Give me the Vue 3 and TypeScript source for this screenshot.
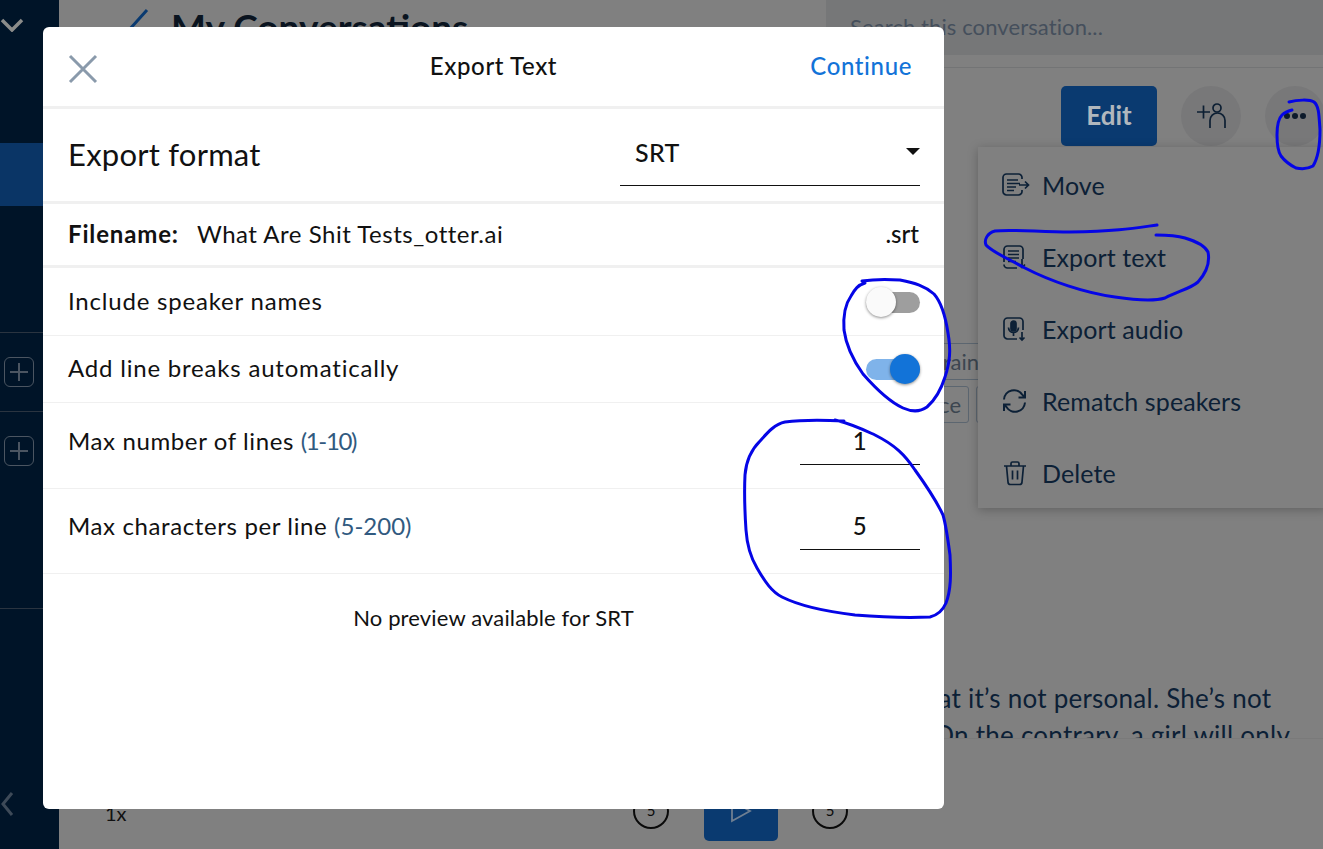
<script setup lang="ts">
interface MenuItem { label: string; icon: string }
const menu: MenuItem[] = [
  { label: 'Move', icon: 'move' },
  { label: 'Export text', icon: 'text' },
  { label: 'Export audio', icon: 'audio' },
  { label: 'Rematch speakers', icon: 'sync' },
  { label: 'Delete', icon: 'trash' },
]
const ink: string[] = [
  'M1289 102C1297 100 1309 99 1314 102C1319 106 1319 115 1320 130C1320 145 1318 158 1313 166C1308 169 1301 169 1296 168C1290 165 1284 160 1281 156C1277 150 1277 142 1277 135C1277 125 1278 119 1282 115C1285 112 1288 111 1292 110',
  'M1157 225C1135 228 1120 231 1070 232C1040 232 1010 229 995 231C987 233 984 240 986 245C992 252 1005 257 1025 268C1050 281 1085 293 1115 297C1135 300 1155 301 1165 298C1178 291 1190 289 1198 282C1207 272 1210 262 1208 252C1205 246 1195 241 1185 238C1175 235 1165 235 1156 235',
  'M862 281C875 279 885 279 900 280C915 283 925 286 934 294C942 303 946 320 948 333C951 350 950 362 945 377C941 390 935 400 927 407C920 412 912 412 903 408C890 402 877 390 863 374C853 360 846 345 844 330C843 315 846 303 851 296C855 289 858 285 865 283',
  'M844 421C825 420 800 420 785 422C775 424 768 432 760 441C751 450 746 462 745 475C744 495 745 515 746 530C747 545 751 558 757 568C765 582 772 592 782 597C800 606 830 612 855 615C880 617 905 618 930 617C938 615 943 610 946 603C951 590 951 575 950 555C948 540 946 525 943 515C936 500 928 488 915 470C905 455 895 445 875 435C862 429 852 424 835 420',
]
</script>

<template>
  <div class="app">
    <aside class="rail">
      <svg class="chev" width="24" height="16" viewBox="0 0 24 16"><path d="M2 4l10 10 10-10" fill="none" stroke="#8b8c8a" stroke-width="3.500" /></svg>
      <div class="rail-active"></div>
      <div class="rail-group">
        <div class="add-cell"><span class="add"></span></div>
        <div class="add-cell"><span class="add"></span></div>
      </div>
      <div class="rail-rule"></div>
      <svg class="back" width="14" height="26" viewBox="0 0 14 26"><path d="M12 3L3 14l9 11" fill="none" stroke="#3d4a58" stroke-width="3" /></svg>
    </aside>

    <main class="main">
      <header class="topbar">
        <div class="crumb">
          <svg width="22" height="40" viewBox="0 0 22 40"><path d="M20 2L2 22l18 20" fill="none" stroke="#0a3a70" stroke-width="3" /></svg>
          <h1>My Conversations</h1>
        </div>
        <div class="search">Search this conversation...</div>
      </header>
      <div class="content">
        <div class="actions">
          <button class="edit">Edit</button>
          <span class="round">
            <svg width="34" height="30" viewBox="0 0 34 30"><g fill="none" stroke="#0d1f33" stroke-width="1.700"><path d="M3 11h13M9.500 4.500v13" /><circle cx="23" cy="7" r="4" /><path d="M16 27v-7.500a7.500 7.500 0 0 1 15 0V27" /></g></svg>
          </span>
          <span class="round dots"><i></i><i></i><i></i></span>
        </div>
        <div class="tags">
          <div class="tag-line"><span class="tag wide">Brain</span></div>
          <div class="tag-line"><span class="tag sci">Science</span><span class="tag blank"></span></div>
        </div>
        <p class="para">You have to understand that it’s not personal. She’s not<br />trying to hurt you by this. On the contrary, a girl will only</p>
        <nav class="menu">
          <div v-for="m in menu" :key="m.label" class="menu-row">
            <svg width="30" height="30" viewBox="0 0 30 30" fill="none" stroke="#0c2036" stroke-width="1.700">
              <template v-if="m.icon === 'move'">
                <path d="M22 9V7.500A3.500 3.500 0 0 0 18.500 4H6.500A3.500 3.500 0 0 0 3 7.500v14A3.500 3.500 0 0 0 6.500 25h12a3.500 3.500 0 0 0 3.500-3.500V20" />
                <path d="M7 10h11M7 13.500h13M7 17h9M7 20.500h7M19 15h9M25 11.500l3.500 3.500-3.500 3.500" />
              </template>
              <template v-else-if="m.icon === 'text'">
                <path d="M4 20V7.500A3.500 3.500 0 0 1 7.500 4h12A3.500 3.500 0 0 1 23 7.500V17M17 26H7.500A3.500 3.500 0 0 1 4 22.500" />
                <path d="M8 9h11M8 12.500h11M8 16h11M8 19.500h8M22 17v8M19 22.500l3 3 3-3" />
              </template>
              <template v-else-if="m.icon === 'audio'">
                <path d="M17 25H7.500A3.500 3.500 0 0 1 4 21.500V7.500A3.500 3.500 0 0 1 7.500 4h12A3.500 3.500 0 0 1 23 7.500V16" />
                <rect x="11" y="7" width="5" height="10" rx="2.500" fill="#0c2036" />
                <path d="M8.500 13.500a5 5 0 0 0 10 0M13.500 18.500V22M22 18v8M19.500 23.500l2.500 2.500 2.500-2.500" />
              </template>
              <template v-else-if="m.icon === 'sync'">
                <path stroke-width="2" d="M4 13.500A10 10 0 0 1 22.500 9L25 11.500M25 5v6.500h-6.500M25 16.500A10 10 0 0 1 6.500 21L4 18.500M4 25v-6.500h6.500" />
              </template>
              <template v-else>
                <path d="M4 8h22M11 8V5.500A1.500 1.500 0 0 1 12.500 4h5A1.500 1.500 0 0 1 19 5.500V8M6.500 8l1.500 16a2.500 2.500 0 0 0 2.500 2.500h9a2.500 2.500 0 0 0 2.500-2.500L23.500 8M12.500 12.500v9M17.500 12.500v9" />
              </template>
            </svg>
            <span>{{ m.label }}</span>
          </div>
        </nav>
      </div>
      <footer class="player">
        <span class="speed">1x</span>
        <div class="controls">
          <span class="skip">5</span>
          <span class="play">
            <svg width="24" height="24" viewBox="0 0 24 24"><path d="M3 2v20l18-10z" fill="none" stroke="#6f7f92" stroke-width="1.800" /></svg>
          </span>
          <span class="skip">5</span>
        </div>
      </footer>
    </main>

    <section class="dialog">
      <header class="dlg-head">
        <svg class="close" width="30" height="30" viewBox="0 0 30 30"><path d="M2 2l26 26M28 2L2 28" stroke="#8a9aab" stroke-width="3" fill="none" /></svg>
        <h2>Export Text</h2>
        <a class="cont">Continue</a>
      </header>
      <div class="format">
        <span class="fmt-label">Export format</span>
        <div class="select"><span>SRT</span><i class="caret"></i></div>
      </div>
      <div class="file">
        <b>Filename:</b><span class="fname">What Are Shit Tests_otter.ai</span><span class="ext">.srt</span>
      </div>
      <div class="opt sw-row first">
        <span>Include speaker names</span>
        <span class="switch"><i class="track"></i><i class="knob"></i></span>
      </div>
      <div class="opt sw-row">
        <span>Add line breaks automatically</span>
        <span class="switch on"><i class="track"></i><i class="knob"></i></span>
      </div>
      <div class="opt num-row lines">
        <span>Max number of lines <em>(1-10)</em></span>
        <span class="num">1</span>
      </div>
      <div class="opt num-row chars">
        <span>Max characters per line <em>(5-200)</em></span>
        <span class="num">5</span>
      </div>
      <p class="nopreview">No preview available for SRT</p>
    </section>

    <svg class="ink" width="1323" height="849" viewBox="0 0 1323 849">
      <path v-for="(d, i) in ink" :key="i" :d="d" fill="none" stroke="#0505e6" stroke-width="3" stroke-linecap="round" />
    </svg>
  </div>
</template>

<style>
html, body { margin: 0; padding: 0; overflow: hidden; background: #808080; }
</style>

<style scoped>
.app {
  position: relative;
  display: flex;
  width: 1323px;
  height: 849px;
  overflow: hidden;
  background: #808080;
  font-family: Lato, "Noto Sans", sans-serif;
  color: #0c2036;
}
.rail {
  position: relative;
  flex: 0 0 59px;
  display: flex;
  flex-direction: column;
  background: #001428;
}
.chev { margin: 16px 0 0 0; }
.rail-active { height: 63px; margin-top: 111px; background: #0a3566; }
.rail-group { margin-top: 126px; }
.rail-rule { margin-top: 118px; height: 1px; background: #2a3440; }
.add-cell { height: 78px; border-top: 1px solid #2a3440; display: flex; align-items: center; padding-left: 4px; }
.add {
  position: relative;
  width: 28px;
  height: 28px;
  border: 1.500px solid #4b5561;
  border-radius: 6px;
}
.add::before, .add::after { content: ""; position: absolute; background: #4b5561; }
.add::before { left: 5px; right: 5px; top: 13px; height: 1.500px; }
.add::after { top: 5px; bottom: 5px; left: 13px; width: 1.500px; }
.back { position: absolute; left: 0; top: 790px; }

.main { flex: 1; min-width: 0; display: flex; flex-direction: column; }
.topbar { height: 68px; flex: none; display: flex; box-sizing: border-box; border-bottom: 1px solid #737475; }
.crumb { flex: 0 0 767px; display: flex; align-items: flex-start; gap: 22px; padding: 8px 0 0 68px; box-sizing: border-box; }
.crumb h1 { margin: 0; font-size: 37px; font-weight: 700; line-height: 38px; color: #0a1420; white-space: nowrap; }
.search { flex: 1; height: 55px; box-sizing: border-box; background: #767778; padding: 13px 0 0 24px; font-size: 22px; letter-spacing: .1px; color: #454f5c; }
.content { position: relative; flex: 1; overflow: hidden; }
.actions { display: flex; justify-content: flex-end; align-items: center; gap: 24px; padding: 18px 0 0; margin-right: -2px; }
.edit { width: 96px; height: 60px; border: 0; border-radius: 5px; padding: 0 0 2px; background: #0a3a70; color: #b1b7bd; font: 700 26px Lato, sans-serif; }
.round { width: 60px; height: 60px; border-radius: 50%; background: #787879; display: flex; align-items: center; justify-content: center; gap: 2px; }
.dots i { width: 6px; height: 6px; border-radius: 50%; background: #0c1a2b; }
.tags { position: absolute; left: 820px; top: 275px; font-size: 22px; color: #3c4650; }
.tag-line { display: flex; gap: 7px; height: 43px; }
.tag { display: inline-block; box-sizing: border-box; height: 37px; line-height: 35px; border: 1px solid #5c6670; border-radius: 3px; text-align: right; }
.tag.wide { width: 100px; border-width: 1px 0; border-radius: 0; }
.tag.sci { width: 90px; padding-right: 7px; }
.tag.blank { width: 40px; }
.para { position: absolute; left: 573px; top: 612px; margin: 0; text-align: left; font-size: 26px; line-height: 37px; letter-spacing: .25px; color: #0c2036; white-space: nowrap; }
.menu { position: absolute; right: -4px; top: 79px; width: 349px; height: 361px; box-sizing: border-box; padding: 2px 0 0 22px; background: #808080; box-shadow: 0 2px 10px rgba(0,0,0,.25); }
.menu-row { display: flex; align-items: center; gap: 12px; height: 72px; font-size: 25px; letter-spacing: .1px; color: #0c2036; }
.player { flex: none; height: 111px; position: relative; background: #808080; border-top: 1px solid #7a7a7a; box-sizing: border-box; }
.speed { position: absolute; left: 46px; top: 62px; font-size: 20px; color: #111; }
.controls { position: absolute; left: 574px; top: 42px; display: flex; align-items: center; gap: 35px; }
.skip { width: 36px; height: 36px; box-sizing: border-box; border: 2.500px solid #0a0a0a; border-radius: 50%; text-align: center; font-size: 15px; line-height: 30px; color: #0a0a0a; }
.play { width: 74px; height: 60px; margin-right: -1px; border-radius: 5px; background: #0a3a70; display: flex; align-items: center; justify-content: center; }

.dialog {
  position: absolute;
  z-index: 2;
  left: 43px;
  top: 27px;
  width: 901px;
  height: 782px;
  box-sizing: border-box;
  background: #fff;
  border-radius: 6px;
  color: #111;
  font-size: 24px;
  letter-spacing: .52px;
}
.dialog > * { box-sizing: border-box; }
.dlg-head { position: relative; height: 82px; display: flex; align-items: center; justify-content: center; border-bottom: 3px solid #f0f0f0; letter-spacing: .62px; }
.close { position: absolute; left: 25px; top: 27px; }
.dlg-head h2 { margin: 0 0 1px; font-size: 24px; font-weight: 500; line-height: 30px; }
.cont { position: absolute; right: 32px; top: 24px; color: #1273d8; font-size: 24px; font-weight: 500; line-height: 30px; }
.format { height: 95px; display: flex; align-items: center; justify-content: space-between; padding: 0 24px 0 25px; border-bottom: 3px solid #f0f0f0; }
.fmt-label { font-size: 31px; font-weight: 400; letter-spacing: .23px; margin-bottom: 2px; }
.select { align-self: flex-start; margin-top: 17px; width: 300px; height: 60px; box-sizing: border-box; padding: 0 0 8px 15px; display: flex; align-items: center; justify-content: space-between; border-bottom: 1px solid #111; font-size: 25px; font-weight: 500; letter-spacing: .3px; }
.caret { border: 7.500px solid transparent; border-top: 7.500px solid #111; border-bottom: 0; }
.file { height: 64px; display: flex; align-items: center; padding: 0 25px 2px; border-bottom: 3px solid #f0f0f0; }
.file b { font-weight: 700; margin-right: 18px; letter-spacing: .85px; }
.fname { flex: 1; }
.ext { font-weight: 500; letter-spacing: 0; }
.opt { display: flex; align-items: center; justify-content: space-between; padding: 0 24px 0 25px; border-bottom: 1px solid #f0f0f0; letter-spacing: .62px; }
.sw-row { height: 67px; letter-spacing: .8px; }
.sw-row > span:first-child { margin-bottom: 3px; }
.sw-row.first { height: 68px; }
.num-row { height: 85px; align-items: flex-start; }
.num-row.lines { height: 86px; }
.num-row > span:first-child { padding-top: 23px; line-height: 30px; }
.num-row.chars > span:first-child { padding-top: 22px; }
.num-row em { font-style: normal; color: #315a80; letter-spacing: 0; }
.num-row.lines em { letter-spacing: -1.400px; }
.num { width: 120px; height: 62px; box-sizing: border-box; padding-top: 23px; line-height: 30px; text-align: center; border-bottom: 1px solid #111; font-weight: 500; }
.chars .num { height: 61px; padding-top: 22px; }
.switch { position: relative; width: 54px; height: 30px; }
.track { position: absolute; left: 0; right: 0; top: 5px; height: 21px; border-radius: 11px; background: #9e9e9e; }
.on .track { background: #7fb3ea; }
.knob { position: absolute; left: 0; top: 0; width: 30px; height: 30px; border-radius: 50%; background: #fafafa; box-shadow: 0 1px 3px rgba(0,0,0,.45); }
.on .knob { left: auto; right: 0; background: #1273d8; }
.nopreview { margin: 30px 0 0; text-align: center; font-size: 22px; line-height: 28px; color: #111; letter-spacing: .15px; }
.ink { position: absolute; z-index: 3; left: 0; top: 0; pointer-events: none; }
</style>
